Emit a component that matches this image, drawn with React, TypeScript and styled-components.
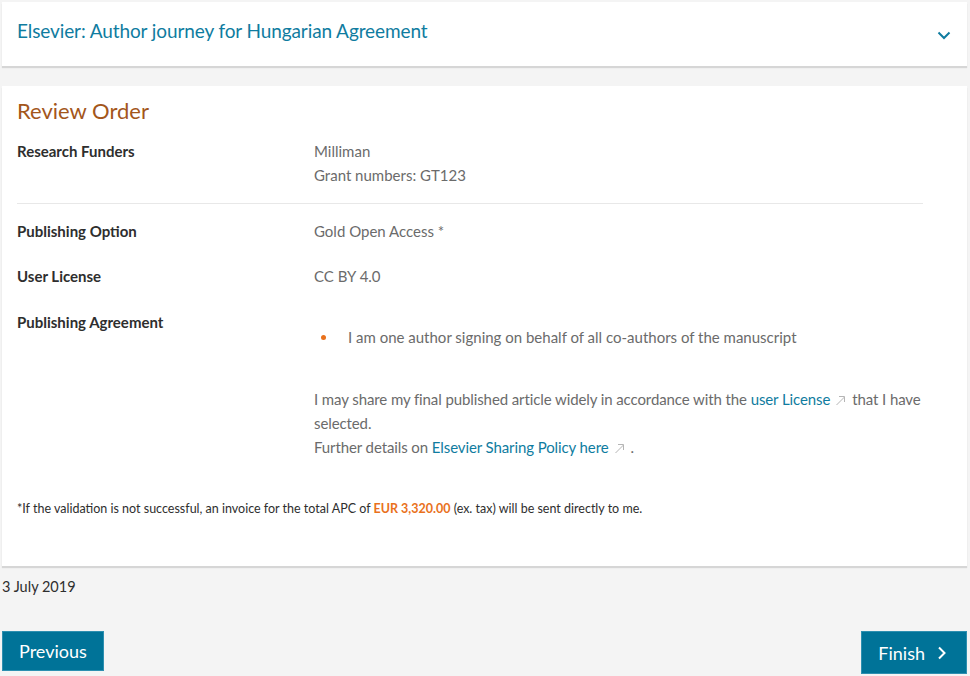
import React from "react";
import styled, { createGlobalStyle } from "styled-components";

const Global = createGlobalStyle`
  html, body { margin: 0; padding: 0; background: #f4f4f4; }
  body { font-family: Lato, "Open Sans", sans-serif; color: #2e2e2e; }
  * { box-sizing: border-box; }
`;

const Page = styled.div`
  padding: 2px 3px 0 2px;
  display: flex;
  flex-direction: column;
`;

const Card = styled.section`
  background: #fff;
  box-shadow: 0 2px 1px rgba(0, 0, 0, 0.12);
`;

const HeaderCard = styled(Card)`
  height: 64px;
  display: flex;
  align-items: flex-start;
  justify-content: space-between;
  padding: 16px 16px 0 15px;
`;

const HeaderTitle = styled.h1`
  margin: 0;
  font-size: 19px;
  line-height: 26px;
  font-weight: 400;
  color: #0f7ca0;
  letter-spacing: -0.1px;
`;

const Chevron = styled.svg`
  margin-top: 13px;
`;

const ReviewCard = styled(Card)`
  margin-top: 20px;
  padding: 10px 44px 0 15px;
  height: 480px;
`;

const Heading = styled.h2`
  margin: 0 0 13px;
  font-size: 22px;
  font-weight: 400;
  color: #a3561b;
  line-height: 30px;
`;

const Row = styled.div<{ $gap?: number }>`
  display: grid;
  grid-template-columns: 297px 1fr;
  padding-top: ${(p) => p.$gap ?? 0}px;
`;

const Label = styled.div`
  font-size: 15px;
  font-weight: 700;
  color: #2e2e2e;
  line-height: 24px;
`;

const Value = styled.div`
  font-size: 15px;
  color: #6b6b6b;
  line-height: 24px;
`;

const Divider = styled.hr`
  border: 0;
  border-top: 1px solid #e8e8e8;
  margin: 16px 0 15px;
`;

const Bullets = styled.ul`
  margin: 15px 0 0;
  padding: 0;
  list-style: none;
`;

const Bullet = styled.li`
  display: flex;
  align-items: center;
  gap: 22px;
  padding-left: 7px;
  &::before {
    content: "";
    width: 5px;
    height: 5px;
    border-radius: 50%;
    background: #e9711c;
  }
`;

const Share = styled.p`
  margin: 38px 0 0;
  letter-spacing: -0.1px;
`;

const Link = styled.a`
  color: #0f7ca0;
  text-decoration: none;
`;

const Note = styled.p`
  margin: 41px 0 0;
  font-size: 12.5px;
  color: #2e2e2e;
  line-height: 18px;
`;

const Price = styled.span`
  color: #e9711c;
  font-weight: 700;
`;

const DateLine = styled.div`
  margin-top: 10px;
  font-size: 14.5px;
  color: #2e2e2e;
  line-height: 22px;
`;

const Actions = styled.div`
  margin-top: 33px;
  display: flex;
  justify-content: space-between;
  align-items: flex-start;
`;

const Button = styled.button<{ $tall?: boolean }>`
  background: #007398;
  color: #fff;
  border: 1px solid #2d8fb0;
  font-family: inherit;
  font-size: 18px;
  height: ${(p) => (p.$tall ? 43 : 40)}px;
  padding: 0 ${(p) => (p.$tall ? 19 : 16)}px 0 16px;
  display: flex;
  align-items: center;
  gap: 12px;
  cursor: pointer;
`;

const Ext = styled.svg`
  margin: 0 6px 0 5px;
  vertical-align: -1px;
`;

const ExtIcon = () => (
  <Ext width="11" height="11" viewBox="0 0 11 11">
    <path d="M1.5 10 L9.5 2 M4 1.5 H9.5 V7" fill="none" stroke="#b5b5b5" strokeWidth="1" />
  </Ext>
);

export default function App() {
  return (
    <>
      <Global />
      <Page>
        <HeaderCard>
          <HeaderTitle>Elsevier: Author journey for Hungarian Agreement</HeaderTitle>
          <Chevron width="14" height="9" viewBox="0 0 14 9">
            <path d="M1.5 1.5 L7 7 L12.5 1.5" fill="none" stroke="#0f7ca0" strokeWidth="2" />
          </Chevron>
        </HeaderCard>
        <ReviewCard>
          <Heading>Review Order</Heading>
          <Row>
            <Label>Research Funders</Label>
            <Value>
              Milliman
              <br />
              Grant numbers: GT123
            </Value>
          </Row>
          <Divider />
          <Row>
            <Label>Publishing Option</Label>
            <Value>Gold Open Access *</Value>
          </Row>
          <Row $gap={21}>
            <Label>User License</Label>
            <Value>CC BY 4.0</Value>
          </Row>
          <Row $gap={22}>
            <Label>Publishing Agreement</Label>
            <Value>
              <Bullets>
                <Bullet>I am one author signing on behalf of all co-authors of the manuscript</Bullet>
              </Bullets>
              <Share>
                I may share my final published article widely in accordance with the{" "}
                <Link href="#">user License</Link>
                <ExtIcon />
                that I have selected.
                <br />
                Further details on <Link href="#">Elsevier Sharing Policy here</Link>
                <ExtIcon />.
              </Share>
            </Value>
          </Row>
          <Note>
            *If the validation is not successful, an invoice for the total APC of <Price>EUR 3,320.00</Price> (ex. tax)
            will be sent directly to me.
          </Note>
        </ReviewCard>
        <DateLine>3 July 2019</DateLine>
        <Actions>
          <Button>Previous</Button>
          <Button $tall>
            Finish
            <svg width="10" height="14" viewBox="0 0 10 14">
              <path d="M2 1.5 L7.5 7 L2 12.5" fill="none" stroke="#fff" strokeWidth="2" />
            </svg>
          </Button>
        </Actions>
      </Page>
    </>
  );
}
